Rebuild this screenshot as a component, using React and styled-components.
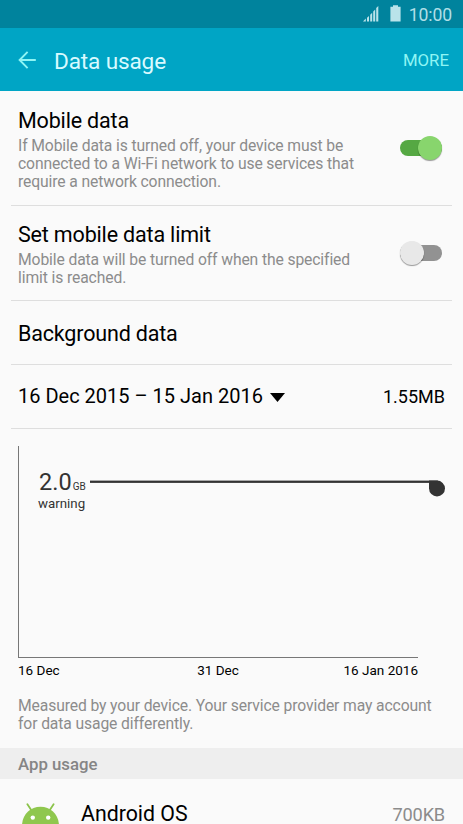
import React, { useState } from 'react'
import styled, { createGlobalStyle } from 'styled-components'

const App = () => {
    const [mobileData, setMobileData] = useState(true)
    const [dataLimit, setDataLimit] = useState(false)

    return (
        <Screen>
            <GlobalStyle />
            <StatusBar>
                <SignalIcon />
                <BatteryIcon />
                <Clock>10:00</Clock>
            </StatusBar>
            <ActionBar>
                <BackButton aria-label="Back">
                    <svg width="18" height="18" viewBox="0 0 18 18" fill="none" stroke="#8ff5f4" strokeWidth="1.9">
                        <path d="M9.6 .9 L1.6 9 L9.6 17.1 M1.8 9 H17.8" />
                    </svg>
                </BackButton>
                <PageTitle>Data usage</PageTitle>
                <MoreButton>MORE</MoreButton>
            </ActionBar>

            <Setting $height={115} $top={17}>
                <SettingText>
                    <Title>Mobile data</Title>
                    <Description>
                        If Mobile data is turned off, your device must be<br />
                        connected to a Wi-Fi network to use services that<br />
                        require a network connection.
                    </Description>
                </SettingText>
                <Switch $on={mobileData} $top={32} onClick={() => setMobileData(!mobileData)}>
                    <Thumb $on={mobileData} />
                </Switch>
            </Setting>
            <Setting $height={95} $top={16}>
                <SettingText>
                    <Title>Set mobile data limit</Title>
                    <Description>
                        Mobile data will be turned off when the specified<br />
                        limit is reached.
                    </Description>
                </SettingText>
                <Switch $on={dataLimit} $top={23} onClick={() => setDataLimit(!dataLimit)}>
                    <Thumb $on={dataLimit} />
                </Switch>
            </Setting>
            <Setting $height={64} $top={20}>
                <Title>Background data</Title>
            </Setting>
            <Setting $height={64} $top={18}>
                <Period>
                    16 Dec 2015 – 15 Jan 2016
                    <svg width="15" height="9" viewBox="0 0 15 9">
                        <path d="M0 0 H15 L7.5 9 Z" fill="#000" />
                    </svg>
                </Period>
                <Total>1.55MB</Total>
            </Setting>

            <Chart>
                <Plot>
                    <Warning>
                        <WarningLabel>
                            <Amount>2.0<small>GB</small></Amount>
                            <span>warning</span>
                        </WarningLabel>
                        <svg width="356" height="17" viewBox="0 0 356 17" fill="#333">
                            <rect x="0" y="0.6" width="348" height="2.3" />
                            <path d="M339 0.6 H347 A8 7.9 0 1 1 339 8.5 Z" />
                        </svg>
                    </Warning>
                </Plot>
                <Dates>
                    <span>16 Dec</span>
                    <span>31 Dec</span>
                    <span>16 Jan 2016</span>
                </Dates>
            </Chart>
            <Note>
                Measured by your device. Your service provider may account<br />
                for data usage differently.
            </Note>

            <SectionHeader>App usage</SectionHeader>
            <AppRow>
                <AndroidIcon />
                <AppName>Android OS</AppName>
                <AppUsage>700KB</AppUsage>
            </AppRow>
        </Screen>
    )
}

export default App

const SignalIcon = () => (
    <svg width="16" height="16" viewBox="0 0 16 16" fill="#b9e3ea">
        <path d="M0 15.4 L2.8 12.6 V15.4 Z" />
        <path d="M4 11.8 L6 9.9 V15.4 H4 Z" />
        <path d="M7.2 8.8 L9.2 6.8 V15.4 H7.2 Z" />
        <path d="M10.2 5.6 L12.2 3.6 V15.4 H10.2 Z" />
        <path d="M13.2 2.1 L15.3 0 V15.4 H13.2 Z" />
    </svg>
)

const BatteryIcon = () => (
    <svg width="11" height="18" viewBox="0 0 11 18" fill="#b9e3ea">
        <path d="M3 .2 H8 V1.8 H10.6 V16.6 H.4 V1.8 H3 Z" />
    </svg>
)

const AndroidIcon = () => (
    <svg width="38" height="22" viewBox="0 0 38 22">
        <path d="M5.4 1.2 L9.2 7 M31.6 1.2 L27.8 7" stroke="#8bc34a" strokeWidth="1.8" strokeLinecap="round" />
        <path d="M0 22 C0.5 11 8.5 3.7 18.5 3.7 S36.5 11 37 22 Z" fill="#8fc74e" />
        <circle cx="10.8" cy="14.6" r="2.2" fill="#fff" />
        <circle cx="26.2" cy="14.6" r="2.2" fill="#fff" />
    </svg>
)

const GlobalStyle = createGlobalStyle`
    * {
        box-sizing: border-box;
    }

    body {
        margin: 0;
        background: #fafafa;
        font-family: Roboto, sans-serif;
        color: #000;
    }

    svg {
        display: block;
        flex: none;
    }

    button {
        border: none;
        padding: 0;
        background: none;
        font-family: inherit;
        cursor: pointer;
    }
`

const Screen = styled.div`
    width: 463px;
    height: 824px;
    overflow: hidden;
    white-space: nowrap;
`

const StatusBar = styled.div`
    height: 28px;
    display: flex;
    justify-content: flex-end;
    align-items: center;
    padding: 0 11px 0 0;
    background: #00839d;
    gap: 11px;
`

const Clock = styled.span`
    margin-left: -3px;
    font-size: 17.6px;
    line-height: 28px;
    letter-spacing: -0.1px;
    padding-top: 2px;
    color: #b0dfe7;
`

const ActionBar = styled.div`
    height: 63px;
    display: flex;
    align-items: center;
    padding: 1px 14px 0 18px;
    background: #00a5c5;
`

const BackButton = styled.button`
    margin-top: -1px;
`

const PageTitle = styled.h1`
    flex: 1;
    margin: 3px 0 0 18px;
    font-size: 22.6px;
    font-weight: 400;
    line-height: 60px;
    letter-spacing: -0.15px;
    color: #d9faff;
`

const MoreButton = styled.button`
    font-size: 16.8px;
    line-height: 60px;
    color: #8ff5f4;
`

const Setting = styled.div`
    height: ${props => props.$height}px;
    display: flex;
    justify-content: space-between;
    align-items: flex-start;
    margin: 0 11px;
    padding: ${props => props.$top}px 7px 0;
    border-bottom: 1px solid #dedede;
`

const SettingText = styled.div`
    flex: 1;
`

const Title = styled.h2`
    margin: 0;
    font-size: 21.5px;
    font-weight: 400;
    line-height: 26px;
    letter-spacing: -0.17px;
`

const Description = styled.p`
    margin: 3px 0 0;
    font-size: 15.7px;
    line-height: 18.2px;
    letter-spacing: -0.12px;
    color: #8c8c8c;
`

const Switch = styled.button`
    width: 42px;
    height: 16px;
    display: flex;
    align-items: center;
    justify-content: ${props => props.$on ? 'flex-end' : 'flex-start'};
    margin: ${props => props.$top}px 3px 0 0;
    border-radius: 8px;
    background: ${props => props.$on ? '#55a843' : '#929292'};
`

const Thumb = styled.span`
    width: 24px;
    height: 24px;
    flex: none;
    border-radius: 50%;
    background: ${props => props.$on ? '#88d56d' : '#e8e8e8'};
    box-shadow: 0 1px 1px rgba(0, 0, 0, 0.4);
`

const Period = styled.div`
    display: flex;
    align-items: center;
    gap: 7px;
    font-size: 20px;
    line-height: 26px;

    svg {
        margin-top: 3px;
    }
`

const Total = styled.span`
    margin-top: 1px;
    font-size: 18px;
    line-height: 26px;
`

const Chart = styled.div`
    width: 400px;
    margin: 17px 0 0 18px;
`

const Plot = styled.div`
    height: 212px;
    padding: 22px 0 0 19px;
    border-left: 1px solid #777;
    border-bottom: 1px solid #777;
`

const Warning = styled.div`
    display: flex;
    align-items: flex-start;

    svg {
        margin-top: 12px;
    }
`

const WarningLabel = styled.div`
    width: 52px;
    flex: none;
    font-size: 13.3px;
    line-height: 16px;
    color: #333;
`

const Amount = styled.div`
    height: 28px;
    padding-left: 1px;
    font-size: 23.5px;
    line-height: 28px;

    small {
        margin-left: 1px;
        font-size: 10px;
    }
`

const Dates = styled.div`
    display: grid;
    grid-template-columns: 1fr auto 1fr;
    padding: 3px 0 1px;
    font-size: 13.5px;
    line-height: 18px;

    span:last-child {
        text-align: right;
    }
`

const Note = styled(Description)`
    margin: 17px 18px 0;
`

const SectionHeader = styled.h3`
    height: 31px;
    margin: 14.6px 0 0;
    padding-left: 18px;
    background: #eee;
    font-size: 16.8px;
    font-weight: 500;
    line-height: 32px;
    color: #858585;
`

const AppRow = styled.div`
    display: flex;
    align-items: flex-start;
    padding: 23px 18px 0 22px;

    svg {
        margin-top: 1px;
    }
`

const AppName = styled.span`
    flex: 1;
    margin-left: 21px;
    font-size: 21.3px;
    line-height: 24px;
`

const AppUsage = styled.span`
    font-size: 18.2px;
    line-height: 26px;
    letter-spacing: -0.2px;
    color: #8c8c8c;
`
